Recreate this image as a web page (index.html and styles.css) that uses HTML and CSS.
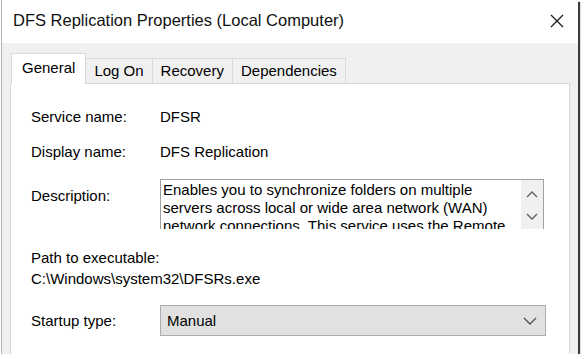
FILE: index.html
```html
<!DOCTYPE html>
<html lang="en">
<head>
  <meta charset="UTF-8" />
  <title>DFS Replication Properties (Local Computer)</title>
  <link rel="stylesheet" href="styles.css">
</head>
<body>

  <div class="window">
    <div class="titlebar">
      <span class="title">DFS Replication Properties (Local Computer)</span>
      <svg class="close" width="14" height="14" viewBox="0 0 14 14">
        <path d="M1 1 L13 13 M13 1 L1 13" stroke="#1a1a1a" stroke-width="1.3" fill="none"/>
      </svg>
    </div>

    <div class="content">
      <div class="tabs">
        <div class="tab active">General</div>
        <div class="tab">Log On</div>
        <div class="tab">Recovery</div>
        <div class="tab">Dependencies</div>
      </div>

      <div class="panel">
        <div class="row first">
          <span class="label">Service name:</span>
          <span class="value">DFSR</span>
        </div>
        <div class="row">
          <span class="label">Display name:</span>
          <span class="value">DFS Replication</span>
        </div>
        <div class="row desc-row">
          <span class="label desc-label">Description:</span>
          <div class="desc-box">
            <div class="desc-text">Enables you to synchronize folders on multiple servers across local or wide area network (WAN) network connections. This service uses the Remote Differential Compression (RDC) protocol.</div>
            <div class="scroll">
              <svg width="12" height="8" viewBox="0 0 12 8"><path d="M1 7 L6 2 L11 7" stroke="#606060" stroke-width="1.4" fill="none"/></svg>
              <svg width="12" height="8" viewBox="0 0 12 8"><path d="M1 1 L6 6 L11 1" stroke="#606060" stroke-width="1.4" fill="none"/></svg>
            </div>
          </div>
        </div>
        <div class="path-label">Path to executable:</div>
        <div class="path">C:\Windows\system32\DFSRs.exe</div>
        <div class="row startup-row">
          <span class="label">Startup type:</span>
          <div class="combo">
            <span>Manual</span>
            <svg width="14" height="8" viewBox="0 0 14 8"><path d="M1 1 L7 7 L13 1" stroke="#555" stroke-width="1.4" fill="none"/></svg>
          </div>
        </div>
      </div>
    </div>
  </div>

</body>
</html>
```

FILE: styles.css
```css
body {
  margin: 0;
  padding: 0;
  background-color: #fff;
  font-family: 'Liberation Sans', Arial, sans-serif;
  font-size: 15px;
  color: #000;
}
.window {
  width: 576px;
  height: 354px;
  margin-left: 1px;
  border-left: 1px solid #b4b4b4;
  background-color: #f0f0f0;
  box-shadow: 2px 2px 1px #3c3c3c;
  overflow: hidden;
}
.titlebar {
  height: 43px;
  background-color: #fff;
  display: flex;
  align-items: center;
  justify-content: space-between;
  padding: 0 14px 0 11px;
}
.title {
  font-size: 16.5px;
  color: #111;
  padding-bottom: 2px;
}
.close {
  margin-bottom: 2px;
}
.content {
  padding: 10px 8px 0 8px;
}
.tabs {
  display: flex;
  align-items: flex-end;
  height: 30px;
  padding-left: 1px;
}
.tab {
  height: 24px;
  line-height: 24px;
  padding: 0 8px;
  border: 1px solid #d9d9d9;
  border-bottom: none;
  margin-left: -1px;
  background-color: #f0f0f0;
}
.tab.active {
  height: 30px;
  line-height: 28px;
  padding: 0 10px;
  background-color: #fff;
  margin-left: 0;
  margin-bottom: -1px;
  position: relative;
  z-index: 1;
}
.panel {
  height: 300px;
  background-color: #fff;
  border: 1px solid #d9d9d9;
  padding-left: 20px;
}
.row {
  display: flex;
  align-items: center;
  margin-top: 17px;
  line-height: 18px;
}
.row.first {
  margin-top: 24px;
}
.label {
  width: 129px;
  flex-shrink: 0;
}
.desc-row {
  align-items: flex-start;
  margin-top: 18px;
}
.desc-label {
  padding-top: 8px;
}
.desc-box {
  width: 382px;
  height: 49px;
  border: 1px solid #a0a0a0;
  border-bottom: none;
  display: flex;
  overflow: hidden;
}
.desc-text {
  flex: 1;
  padding: 1px 2px;
  line-height: 18px;
}
.scroll {
  width: 22px;
  background-color: #f0f0f0;
  display: flex;
  flex-direction: column;
  align-items: center;
  gap: 15px;
  padding-top: 10px;
}
.path-label {
  margin-top: 20px;
  line-height: 18px;
}
.path {
  margin-top: 3px;
  line-height: 18px;
}
.startup-row {
  margin-top: 17px;
}
.combo {
  width: 370px;
  height: 29px;
  border: 1px solid #adadad;
  background-color: #e1e1e1;
  display: flex;
  align-items: center;
  justify-content: space-between;
  padding: 0 8px 0 6px;
}
```
